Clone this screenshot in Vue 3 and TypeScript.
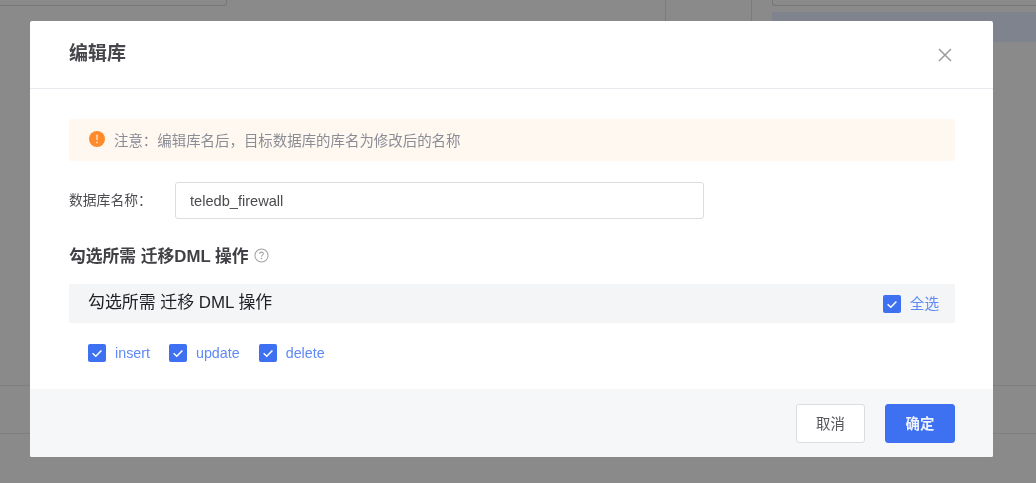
<script setup lang="ts">
const ops: string[] = ['insert', 'update', 'delete']
</script>

<template>
  <div class="page">
    <div class="backdrop">
      <div class="top-row">
        <div class="box-left"></div>
        <div class="cell-lines"></div>
        <div class="right-col">
          <div class="box-right"></div>
          <div class="band"></div>
        </div>
      </div>
      <div class="rows">
        <div class="row-line"></div>
      </div>
    </div>

    <div class="mask">
      <section class="modal">
        <header class="modal-head">
          <h2 class="title">编辑库</h2>
          <svg class="close" viewBox="0 0 14 14" width="14" height="14">
            <path d="M1 1L13 13M13 1L1 13" stroke="#9a9a9f" stroke-width="1.5" fill="none" />
          </svg>
        </header>

        <div class="modal-body">
          <div class="alert">
            <svg class="alert-icon" viewBox="0 0 16 16" width="16" height="16">
              <circle cx="8" cy="8" r="8" fill="#ff8a2b" />
              <rect x="7.2" y="3.6" width="1.6" height="5.6" rx="0.8" fill="#ffd9b8" />
              <circle cx="8" cy="11.4" r="1" fill="#ffd9b8" />
            </svg>
            <span class="alert-text">注意&#xFF1A;编辑库名后&#xFF0C;目标数据库的库名为修改后的名称</span>
          </div>

          <div class="field">
            <label class="field-label">数据库名称&#xFF1A;</label>
            <input class="field-input" type="text" value="teledb_firewall" />
          </div>

          <div class="section-title">
            <span>勾选所需 迁移DML 操作</span>
            <svg class="help" viewBox="0 0 16 16" width="15" height="15">
              <circle cx="8" cy="8" r="7" stroke="#a2a2a6" stroke-width="1.1" fill="none" />
              <path d="M6 6.3C6 5 7 4.4 8 4.4C9.1 4.4 10 5.1 10 6.2C10 7.6 8 7.6 8 9.3" stroke="#a2a2a6" stroke-width="1.1" fill="none" />
              <circle cx="8" cy="11.3" r="0.8" fill="#a2a2a6" />
            </svg>
          </div>

          <div class="group-bar">
            <span class="group-name">勾选所需 迁移 DML 操作</span>
            <span class="check-item all">
              <span class="check">
                <svg viewBox="0 0 18 18" width="18" height="18">
                  <path d="M4.6 9.2L7.8 12.2L13.4 6.4" stroke="#fff" stroke-width="1.5" fill="none" />
                </svg>
              </span>
              <span class="check-label cjk">全选</span>
            </span>
          </div>

          <div class="ops">
            <span v-for="op in ops" :key="op" class="check-item">
              <span class="check">
                <svg viewBox="0 0 18 18" width="18" height="18">
                  <path d="M4.6 9.2L7.8 12.2L13.4 6.4" stroke="#fff" stroke-width="1.5" fill="none" />
                </svg>
              </span>
              <span class="check-label">{{ op }}</span>
            </span>
          </div>
        </div>

        <footer class="modal-foot">
          <button class="btn btn-ghost" type="button">取消</button>
          <button class="btn btn-primary" type="button">确定</button>
        </footer>
      </section>
    </div>
  </div>
</template>

<style>
html,
body {
  margin: 0;
  padding: 0;
  background: #8a8a8a;
}
</style>

<style scoped>
.page {
  position: relative;
  width: 1036px;
  height: 483px;
  overflow: hidden;
  background: #8a8a8a;
  font-family: "Liberation Sans", "Noto Sans CJK SC", sans-serif;
  filter: blur(0.35px);
}

.backdrop {
  height: 100%;
  display: flex;
  flex-direction: column;
}

.top-row {
  display: flex;
  height: 42px;
}

.box-left {
  width: 227px;
  height: 6px;
  border: 1px solid #777;
  border-top: none;
  border-left: none;
  border-bottom-right-radius: 3px;
  box-sizing: border-box;
}

.cell-lines {
  width: 525px;
  height: 21px;
  box-sizing: border-box;
  border-right: 1px solid #7b7b7b;
  position: relative;
}

.cell-lines::before {
  content: "";
  position: absolute;
  top: 0;
  bottom: 0;
  right: 85px;
  width: 1px;
  background: #7b7b7b;
}

.right-col {
  flex: 1;
  margin-left: 20px;
}

.box-right {
  height: 6px;
  box-sizing: border-box;
  border: 1px solid #777;
  border-top: none;
  border-right: none;
  border-bottom-left-radius: 3px;
}

.band {
  height: 30px;
  margin-top: 6px;
  background: #7e838d;
}

.rows {
  flex: 1;
  padding-top: 343px;
}

.row-line {
  height: 49px;
  box-sizing: border-box;
  border-top: 1px solid #7f7f7f;
  border-bottom: 1px solid #7f7f7f;
}

.mask {
  position: absolute;
  inset: 0;
  padding: 21px 0 0 30px;
}

.modal {
  width: 963px;
  height: 436px;
  display: flex;
  flex-direction: column;
  background: #fff;
  border-radius: 2px;
  overflow: hidden;
}

.modal-head {
  height: 68px;
  box-sizing: border-box;
  flex: none;
  display: flex;
  align-items: center;
  justify-content: space-between;
  padding: 0 41px 0 39px;
  border-bottom: 1px solid #e8e9ee;
}

.title {
  margin: 0;
  font-size: 19px;
  font-weight: 700;
  color: #45454a;
  line-height: 24px;
  position: relative;
  top: -1px;
}

.close {
  display: block;
}

.modal-body {
  flex: 1;
  padding: 30px 38px 0 39px;
}

.alert {
  height: 42px;
  display: flex;
  align-items: center;
  padding-left: 20px;
  gap: 9px;
  background: #fff8f0;
  border-radius: 2px;
}

.alert-icon {
  flex: none;
  position: relative;
  top: -1px;
}

.alert-text {
  font-size: 14.45px;
  color: #8b8d96;
  padding-bottom: 1px;
}

.field {
  display: flex;
  align-items: center;
  margin-top: 21px;
  height: 37px;
}

.field-label {
  width: 106px;
  flex: none;
  font-size: 13.8px;
  color: #4d4d52;
  padding-bottom: 3px;
}

.field-input {
  width: 529px;
  height: 37px;
  box-sizing: border-box;
  padding: 0 14px;
  border: 1px solid #dcdde1;
  border-radius: 3px;
  font: inherit;
  font-size: 14.6px;
  color: #4a4a4f;
  background: #fff;
  outline: none;
}

.section-title {
  display: flex;
  align-items: center;
  gap: 5px;
  margin-top: 24px;
  height: 24px;
  font-size: 16.8px;
  font-weight: 700;
  color: #3f3f44;
}

.help {
  flex: none;
}

.group-bar {
  display: flex;
  align-items: center;
  justify-content: space-between;
  margin-top: 17px;
  height: 39px;
  padding: 0 16px 0 19px;
  background: #f4f5f7;
}

.group-name {
  font-size: 16.9px;
  color: #1f1f24;
  position: relative;
  top: -3px;
}

.ops {
  display: flex;
  gap: 19px;
  margin-top: 21px;
  padding-left: 19px;
}

.check-item {
  display: inline-flex;
  align-items: center;
  gap: 9px;
}

.check {
  width: 18px;
  height: 18px;
  flex: none;
  display: block;
  background: #3d71f2;
  border-radius: 2px;
}

.check svg {
  display: block;
}

.check-label {
  font-size: 14.3px;
  color: #5f88f8;
}

.cjk {
  font-size: 14.6px;
  padding-bottom: 2px;
}

.modal-foot {
  flex: none;
  height: 68px;
  display: flex;
  justify-content: flex-end;
  align-items: flex-start;
  gap: 20px;
  padding: 15px 38px 0 0;
  box-sizing: border-box;
  background: #f6f7f9;
}

.btn {
  width: 70px;
  height: 39px;
  box-sizing: border-box;
  padding: 0 0 3px;
  font: inherit;
  font-size: 14.4px;
  border-radius: 3px;
  cursor: pointer;
}

.btn-ghost {
  width: 69px;
  background: #fff;
  border: 1px solid #dcdde0;
  color: #55555a;
}

.btn-primary {
  background: #3d71f2;
  border: 1px solid #3d71f2;
  color: #eef2ff;
  font-weight: 700;
}
</style>
